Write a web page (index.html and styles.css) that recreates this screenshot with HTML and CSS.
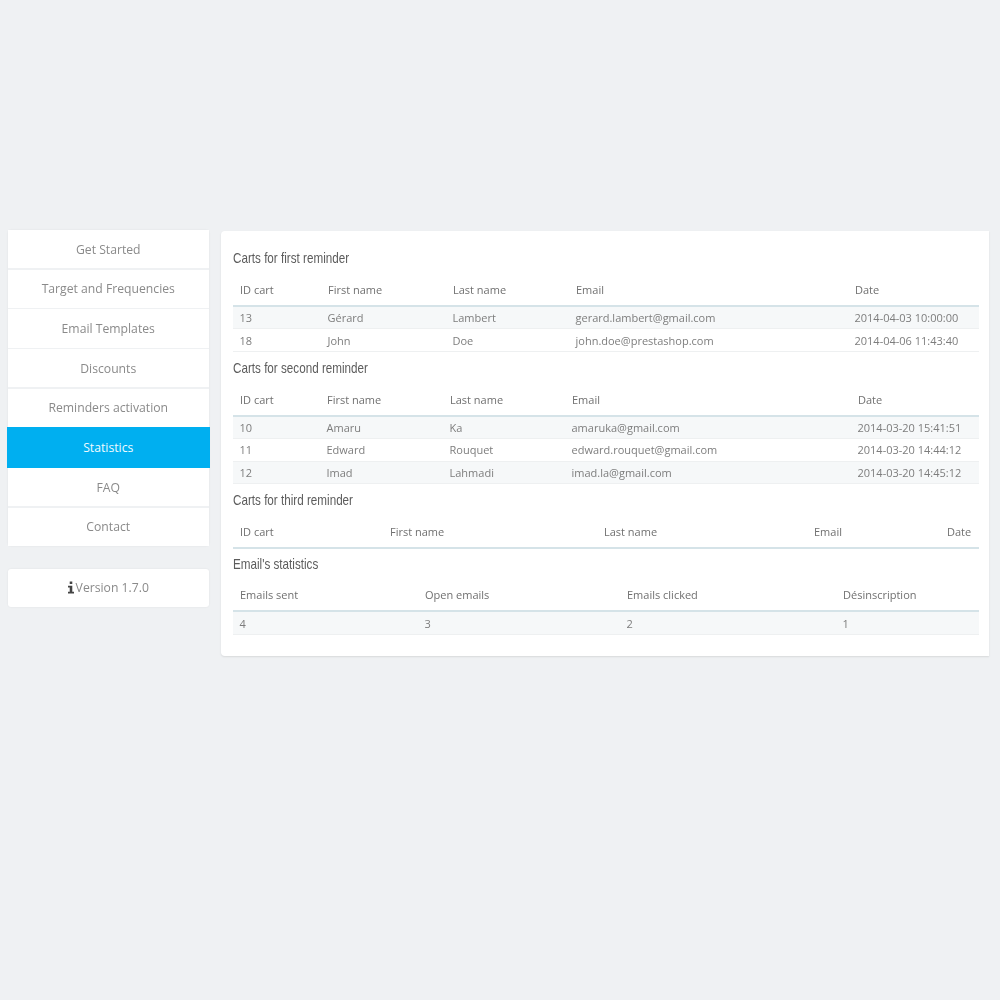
FILE: index.html
```html
<!DOCTYPE html>
<html lang="en">
<head>
<meta charset="utf-8">
<title>Statistics</title>
<link rel="stylesheet" href="styles.css">
</head>
<body>
<div class="page">
  <aside class="sidebar">
    <nav class="menu">
      <a class="item">Get Started</a>
      <a class="item">Target and Frequencies</a>
      <a class="item">Email Templates</a>
      <a class="item">Discounts</a>
      <a class="item">Reminders activation</a>
      <a class="item active">Statistics</a>
      <a class="item">FAQ</a>
      <a class="item">Contact</a>
    </nav>
    <div class="version">
      <svg class="info" viewBox="0 0 7 14" aria-hidden="true"><path d="M2 0h3v3H2zM0 5h5v7h2v2H0v-2h2V7H0z"/></svg>
      <span>Version 1.7.0</span>
    </div>
  </aside>
  <main class="panel">
    <h3 class="title">Carts for first reminder</h3>
    <table class="grid">
      <colgroup><col class="t1a"><col class="t1b"><col class="t1c"><col class="t1d"><col class="t1e"></colgroup>
      <thead><tr><th>ID cart</th><th>First name</th><th>Last name</th><th>Email</th><th>Date</th></tr></thead>
      <tbody>
        <tr><td>13</td><td>Gérard</td><td>Lambert</td><td>gerard.lambert@gmail.com</td><td>2014-04-03 10:00:00</td></tr>
        <tr><td>18</td><td>John</td><td>Doe</td><td>john.doe@prestashop.com</td><td>2014-04-06 11:43:40</td></tr>
      </tbody>
    </table>
    <h3 class="title">Carts for second reminder</h3>
    <table class="grid">
      <colgroup><col class="t2a"><col class="t2b"><col class="t2c"><col class="t2d"><col class="t2e"></colgroup>
      <thead><tr><th>ID cart</th><th>First name</th><th>Last name</th><th>Email</th><th>Date</th></tr></thead>
      <tbody>
        <tr><td>10</td><td>Amaru</td><td>Ka</td><td>amaruka@gmail.com</td><td>2014-03-20 15:41:51</td></tr>
        <tr><td>11</td><td>Edward</td><td>Rouquet</td><td>edward.rouquet@gmail.com</td><td>2014-03-20 14:44:12</td></tr>
        <tr><td>12</td><td>Imad</td><td>Lahmadi</td><td>imad.la@gmail.com</td><td>2014-03-20 14:45:12</td></tr>
      </tbody>
    </table>
    <h3 class="title">Carts for third reminder</h3>
    <table class="grid">
      <colgroup><col class="t3a"><col class="t3b"><col class="t3c"><col class="t3d"><col class="t3e"></colgroup>
      <thead><tr><th>ID cart</th><th>First name</th><th>Last name</th><th>Email</th><th>Date</th></tr></thead>
    </table>
    <h3 class="title short">Email's statistics</h3>
    <table class="grid">
      <colgroup><col class="t4a"><col class="t4b"><col class="t4c"><col class="t4d"></colgroup>
      <thead><tr><th>Emails sent</th><th>Open emails</th><th>Emails clicked</th><th>Désinscription</th></tr></thead>
      <tbody>
        <tr><td>4</td><td>3</td><td>2</td><td>1</td></tr>
      </tbody>
    </table>
  </main>
</div>
</body>
</html>
```
FILE: styles.css
```css
* { box-sizing: border-box; }
html, body { margin: 0; height: 100%; }
body {
  background: #eff1f3;
  font-family: "Open Sans", "Liberation Sans", sans-serif;
  color: #777;
}
.page {
  display: flex;
  align-items: flex-start;
  gap: 12.5px;
  padding: 230px 11px 0 8px;
  filter: blur(.35px);
}
.sidebar {
  width: 200.5px;
  flex: none;
  display: flex;
  flex-direction: column;
  gap: 23px;
}
.menu {
  display: flex;
  flex-direction: column;
  gap: 1.5px;
  border-radius: 3px;
  box-shadow: 0 0 2px rgba(0, 0, 0, .08);
}
.item {
  height: 38.2px;
  display: flex;
  align-items: center;
  justify-content: center;
  background: #fff;
  font-size: 12.2px;
  color: #8a8a8a;
}
.item.active {
  height: 41px;
  margin: -1.5px -1.5px;
  background: #00aff0;
  color: #f0fbff;
  position: relative;
}
.version {
  height: 38px;
  display: flex;
  align-items: center;
  justify-content: center;
  gap: 2px;
  background: #fff;
  border-radius: 3px;
  box-shadow: 0 0 2px rgba(0, 0, 0, .08);
  font-size: 12.2px;
  color: #8a8a8a;
}
.info { width: 6px; height: 13px; fill: #444; }
.panel {
  flex: 1;
  margin-top: 1px;
  padding: 11px 10px 21px 12px;
  background: #fff;
  border-radius: 4px 0 0 4px;
  box-shadow: 0 1px 2px rgba(0, 0, 0, .1);
}
.title {
  margin: 0;
  height: 32px;
  display: flex;
  align-items: center;
  font-family: "Liberation Sans", sans-serif;
  font-size: 14.5px;
  font-weight: 400;
  color: #5c5c5c;
  transform: scaleX(.805);
  transform-origin: left center;
}
.title.short { height: 30px; }
.grid {
  width: 100%;
  table-layout: fixed;
  border-collapse: collapse;
  font-size: 11px;
}
.grid th {
  height: 32px;
  padding: 0 7px;
  text-align: left;
  font-weight: 400;
  color: #707070;
  border-bottom: 2px solid #d5e3e8;
  white-space: nowrap;
}
.grid td {
  height: 22.7px;
  padding: 0 6.5px;
  color: #7d7d7d;
  border-bottom: 1px solid #eef0f1;
  white-space: nowrap;
}
.grid tbody tr:nth-child(odd) { background: #f6f8f9; }
.t1a { width: 88px; } .t1b { width: 125px; } .t1c { width: 123px; } .t1d { width: 279px; } .t1e { width: 131px; }
.t2a { width: 87px; } .t2b { width: 123px; } .t2c { width: 122px; } .t2d { width: 286px; } .t2e { width: 128px; }
.t3a { width: 150px; } .t3b { width: 214px; } .t3c { width: 210px; } .t3d { width: 133px; } .t3e { width: 39px; }
.t4a { width: 185px; } .t4b { width: 202px; } .t4c { width: 216px; } .t4d { width: 143px; }
```
